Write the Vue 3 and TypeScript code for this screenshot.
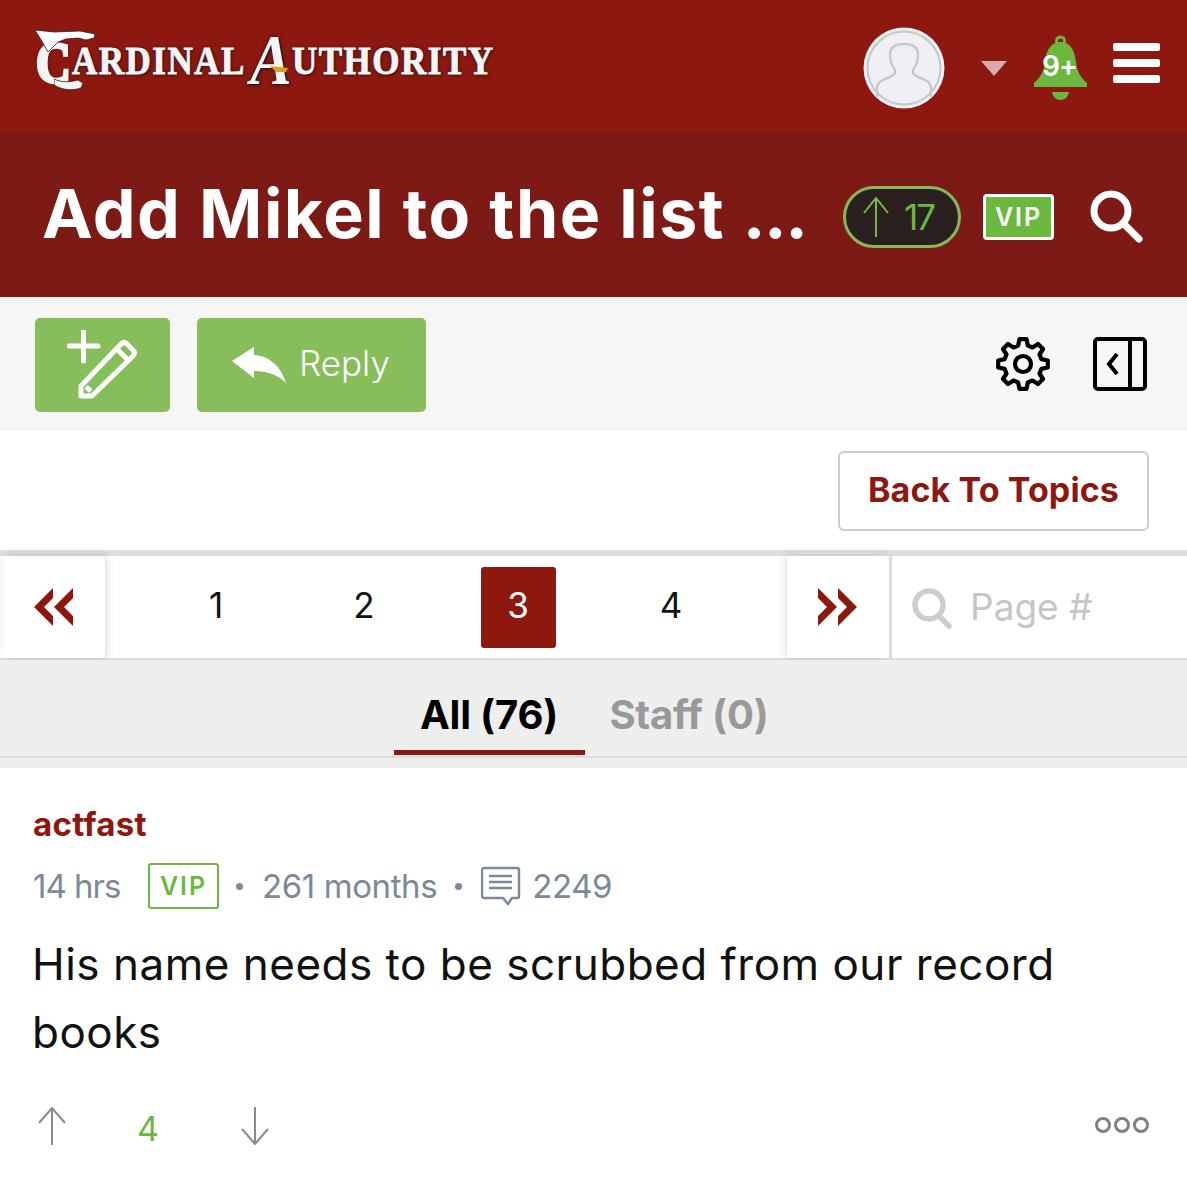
<script setup lang="ts">
const pages = [
  { n: 1, active: false },
  { n: 2, active: false },
  { n: 3, active: true },
  { n: 4, active: false },
]

function gearPath(cx: number, cy: number, outer: number, inner: number, teeth: number): string {
  const step = 360 / teeth
  const pts: string[] = []
  const at = (deg: number, r: number) => {
    const a = (deg * Math.PI) / 180
    return `${(cx + r * Math.cos(a)).toFixed(1)} ${(cy + r * Math.sin(a)).toFixed(1)}`
  }
  for (let i = 0; i < teeth; i++) {
    const c = i * step - 90
    pts.push(at(c - 15, inner), at(c - 8, outer), at(c + 8, outer), at(c + 15, inner))
  }
  return `M${pts.join(' L')} Z`
}
const gear = gearPath(27, 28, 25, 19, 8)
</script>

<template>
  <div class="page">
    <header class="top">
      <div class="logo">
        <span class="big-c">
          <span class="c-letter">C</span>
          <svg class="wing" viewBox="0 0 62 24" width="62" height="24" aria-hidden="true">
            <path d="M1 1 L20 3 L46 2 L61 5 L60 9 L52 11 L44 9 L32 10 L24 13 L20 17 L14 23 L9 14 Z" fill="#fff" stroke="#2a2222" stroke-width=".8" />
          </svg>
          <svg class="tail" viewBox="0 0 30 14" width="30" height="14" aria-hidden="true">
            <path d="M0 2 C8 6 16 5 24 3 L29 6 L27 11 C18 14 8 13 0 8 Z" fill="#f4f4f4" stroke="#2a2222" stroke-width=".8" />
          </svg>
        </span>
        <span class="word first">ARDINAL</span>
        <span class="big-a">
          <span class="a-letter">A</span>
          <svg class="beak" viewBox="0 0 18 8" width="18" height="8" aria-hidden="true"><path d="M0 1 L18 3 L16 7 L6 7 Z" fill="#d9a21f" /></svg>
        </span>
        <span class="word">UTHORITY</span>
      </div>
      <div class="top-right">
        <div class="avatar">
          <svg viewBox="0 0 82 82" width="82" height="82" aria-hidden="true">
            <circle cx="41" cy="41" r="40.5" fill="#eef0f4" />
            <circle cx="41" cy="41" r="36.5" fill="none" stroke="#c4c8cc" stroke-width="2" />
            <path d="M14 70 V61 C14 54 22 52 29 49 C33 47 33 44 31 41 C28 37 27 33 27 28 C27 20 33 17 41 17 C49 17 55 20 55 28 C55 33 54 37 51 41 C49 44 49 47 53 49 C60 52 68 54 68 61 V70" fill="none" stroke="#c4c8cc" stroke-width="2.4" />
          </svg>
        </div>
        <span class="caret"></span>
        <div class="bell">
          <svg viewBox="0 0 55 66" width="55" height="66" aria-hidden="true">
            <circle cx="27.5" cy="6" r="4" fill="none" stroke="#6cb83f" stroke-width="3" />
            <path d="M27.5 7 C17 7 13 17 12 27 C11 36 8 42 1 48 V52 H54 V48 C47 42 44 36 43 27 C42 17 38 7 27.5 7 Z" fill="#6cb83f" />
            <path d="M19 57 H36 C35 62 32 65 27.5 65 C23 65 20 62 19 57 Z" fill="#6cb83f" />
          </svg>
          <span class="bell-count">9+</span>
        </div>
        <div class="burger"><i></i><i></i><i></i></div>
      </div>
    </header>

    <section class="band">
      <h1 class="title">Add Mikel to the list <span class="dots">...</span></h1>
      <div class="pill">
        <svg viewBox="0 0 28 42" width="28" height="42" aria-hidden="true">
          <path d="M14 41 V2 M2 17 L14 2 L26 17" fill="none" stroke="#76b84c" stroke-width="2" />
        </svg>
        <span>17</span>
      </div>
      <span class="vip-solid">VIP</span>
      <svg class="band-search" viewBox="0 0 54 54" width="54" height="54" aria-hidden="true">
        <circle cx="21" cy="21" r="17" fill="none" stroke="#fff" stroke-width="7" />
        <path d="M34 34 L49 49" stroke="#fff" stroke-width="7" stroke-linecap="round" />
      </svg>
    </section>

    <section class="toolbar">
      <button class="green new">
        <svg viewBox="0 0 72 70" width="72" height="70" aria-hidden="true">
          <path d="M2 16 H31 M16.5 1 V31" stroke="#fff" stroke-width="5" stroke-linecap="round" fill="none" />
          <path d="M14 66 V56 L54 14 C56 12 58 12 60 14 L66 20 C68 22 68 24 66 26 L25 66 Z M19 57 L24 61 M51 20 L60 29" stroke="#fff" stroke-width="5" stroke-linejoin="round" fill="none" />
        </svg>
      </button>
      <button class="green reply">
        <svg viewBox="0 0 54 36" width="54" height="36" aria-hidden="true">
          <path d="M0 14 L22 0 V8 C38 9 49 20 54 36 C46 28 36 24 22 24 V31 Z" fill="#fff" />
        </svg>
        <span class="reply-label">Reply</span>
      </button>
      <div class="spacer"></div>
      <svg class="gear" viewBox="0 0 54 56" width="54" height="56" aria-hidden="true">
        <path :d="gear" fill="none" stroke="#000" stroke-width="4.2" stroke-linejoin="round" />
        <circle cx="27" cy="28" r="8" fill="none" stroke="#000" stroke-width="4.2" />
      </svg>
      <svg class="panel" viewBox="0 0 54 54" width="54" height="54" aria-hidden="true">
        <rect x="2" y="2" width="50" height="50" rx="3" fill="none" stroke="#000" stroke-width="4" />
        <path d="M37 2 V52" stroke="#000" stroke-width="4" />
        <path d="M24 17 L16 27 L24 37" fill="none" stroke="#000" stroke-width="4" />
      </svg>
    </section>

    <section class="back-row">
      <button class="back">Back To Topics</button>
    </section>

    <nav class="pager">
      <div class="arrow prev">
        <svg viewBox="0 0 40 38" width="40" height="38" aria-hidden="true">
          <path d="M19 0 L0 19 L19 38 V28 L10 19 L19 10 Z M39 0 L20 19 L39 38 V28 L30 19 L39 10 Z" fill="#8c1810" />
        </svg>
      </div>
      <div class="nums">
        <span v-for="p in pages" :key="p.n" class="num" :class="{ on: p.active }"><b>{{ p.n }}</b></span>
      </div>
      <div class="arrow next">
        <svg viewBox="0 0 40 38" width="40" height="38" aria-hidden="true">
          <path d="M0 0 L19 19 L0 38 V28 L9 19 L0 10 Z M20 0 L39 19 L20 38 V28 L29 19 L20 10 Z" fill="#8c1810" />
        </svg>
      </div>
      <div class="page-find">
        <svg viewBox="0 0 40 42" width="40" height="42" aria-hidden="true">
          <circle cx="17" cy="17" r="14" fill="none" stroke="#cdcdcd" stroke-width="5.5" />
          <path d="M27 28 L37 38" stroke="#cdcdcd" stroke-width="5.5" stroke-linecap="round" />
        </svg>
        <span class="find-label">Page #</span>
      </div>
    </nav>

    <div class="tabs">
      <div class="tab current">All (76)</div>
      <div class="tab">Staff (0)</div>
    </div>

    <article class="post">
      <div class="author">actfast</div>
      <div class="meta">
        <span class="age">14 hrs</span>
        <span class="vip-line">VIP</span>
        <i class="dot"></i>
        <span>261 months</span>
        <i class="dot"></i>
        <svg viewBox="0 0 40 40" width="40" height="40" aria-hidden="true">
          <path d="M3 2 H36 C37 2 38 3 38 4 V30 C38 31 37 32 36 32 H31 L27 38 L22 32 H3 C2 32 1 31 1 30 V4 C1 3 2 2 3 2 Z" fill="none" stroke="#7b8a99" stroke-width="2.4" stroke-linejoin="round" />
          <path d="M8 10 H31 M8 16 H31 M8 22 H31" stroke="#7b8a99" stroke-width="2.4" />
        </svg>
        <span>2249</span>
      </div>
      <p class="body">His name needs to be scrubbed from our record books</p>
      <div class="votes">
        <svg viewBox="0 0 28 38" width="28" height="38" aria-hidden="true">
          <path d="M14 38 V1 M1 16 L14 1 L27 16" fill="none" stroke="#8a8a8a" stroke-width="2" />
        </svg>
        <span class="score">4</span>
        <svg class="down" viewBox="0 0 28 38" width="28" height="38" aria-hidden="true">
          <path d="M14 0 V37 M1 22 L14 37 L27 22" fill="none" stroke="#8a8a8a" stroke-width="2" />
        </svg>
        <div class="spacer"></div>
        <div class="more"><i></i><i></i><i></i></div>
      </div>
    </article>
  </div>
</template>

<style>
html, body { margin: 0; background: #fff; }
</style>

<style scoped>
.page {
  width: 1187px;
  height: 1200px;
  overflow: hidden;
  font-family: Inter, Lato, sans-serif;
  color: #111;
  background: #fff;
}
.spacer { flex: 1; }
button { font-family: inherit; cursor: pointer; }

.top {
  height: 133px;
  box-sizing: border-box;
  background: #8c1810;
  display: flex;
  align-items: flex-start;
  justify-content: space-between;
  padding: 27px 27px 0 34px;
}
.logo {
  display: flex;
  align-items: center;
  height: 66px;
  font-family: "Liberation Serif", serif;
  font-weight: 700;
  color: #f4f4f4;
  text-shadow: 0 0 3px #1a1a1a, 1px 1px 2px #1a1a1a;
}
.word {
  font-size: 35px;
  letter-spacing: 1.5px;
  line-height: 1;
  transform: scaleY(1.14);
  -webkit-text-stroke: .8px #f4f4f4;
  white-space: nowrap;
}
.word.first { width: 178px; flex: none; }
.big-c {
  position: relative;
  width: 38px;
  height: 66px;
  flex: none;
  font-size: 48px;
  line-height: 50px;
  -webkit-text-stroke: 3px #f4f4f4;
}
.c-letter { position: absolute; left: 2px; top: 11px; transform: scaleY(1.2); }
.wing { position: absolute; left: 0; top: 2px; }
.tail { position: absolute; left: 20px; top: 50px; }
.big-a {
  position: relative;
  width: 42px;
  flex: none;
  font-size: 62px;
  line-height: 1;
  font-style: italic;
  text-align: center;
}
.a-letter { display: inline-block; transform: scaleY(1.15); }
.beak { position: absolute; left: 20px; top: 36px; }
.top-right { display: flex; align-items: flex-start; }
.avatar { width: 82px; height: 82px; margin-left: -1px; }
.caret {
  width: 0;
  height: 0;
  border-left: 13px solid transparent;
  border-right: 13px solid transparent;
  border-top: 15px solid #d9a9ab;
  margin: 34px 26px 0 36px;
}
.bell { position: relative; width: 55px; height: 66px; margin-top: 8px; }
.bell svg { display: block; }
.bell-count {
  position: absolute;
  left: 9px;
  top: 13px;
  color: #fff;
  font-size: 28px;
  font-weight: 600;
  line-height: 36px;
  letter-spacing: -1px;
}
.burger { display: flex; flex-direction: column; gap: 8px; margin: 16px 0 0 25px; }
.burger i { display: block; width: 47px; height: 8px; border-radius: 2px; background: #fff; }

.band {
  height: 164px;
  box-sizing: border-box;
  background: #7e1a15;
  display: flex;
  align-items: center;
  padding: 0 44px 0 42px;
}
.title {
  margin: -4px 0 0;
  width: 801px;
  flex: none;
  color: #fff;
  font-size: 68px;
  font-weight: 700;
  line-height: 1;
  white-space: nowrap;
  letter-spacing: 1.5px;
}
.dots { letter-spacing: -1.5px; }
.pill {
  flex: none;
  width: 118px;
  height: 62px;
  box-sizing: border-box;
  border: 3px solid #84b858;
  border-radius: 31px;
  background: #2a2020;
  display: flex;
  align-items: center;
  color: #6cb83f;
  font-size: 35px;
  letter-spacing: -2px;
  gap: 14px;
  padding-left: 16px;
  margin-top: 4px;
}
.vip-solid {
  flex: none;
  width: 71px;
  height: 46px;
  box-sizing: border-box;
  margin: 4px 0 0 22px;
  border: 3px solid #fff;
  border-radius: 4px;
  background: #6cb83f;
  color: #fff;
  font-size: 25px;
  font-weight: 600;
  letter-spacing: 2px;
  line-height: 40px;
  text-align: center;
}
.band-search { flex: none; margin: 4px 0 0 36px; }

.toolbar {
  height: 134px;
  box-sizing: border-box;
  background: #f6f6f6;
  display: flex;
  align-items: center;
  padding: 0 40px 0 35px;
}
.green {
  height: 94px;
  border: 0;
  border-radius: 5px;
  background: #87be5b;
  color: #fff;
  display: flex;
  align-items: center;
  padding: 0;
  margin-top: 1px;
}
.new { width: 135px; justify-content: center; }
.reply { width: 229px; margin-left: 27px; padding-left: 35px; gap: 13px; font-size: 35px; font-weight: 300; }
.reply-label { padding-bottom: 4px; }
.gear { margin-right: 43px; }

.back-row {
  height: 119px;
  box-sizing: border-box;
  display: flex;
  justify-content: flex-end;
  padding: 20px 38px 0 0;
}
.back {
  width: 311px;
  height: 80px;
  box-sizing: border-box;
  background: #fff;
  border: 2px solid #ccc;
  border-radius: 6px;
  color: #8c1810;
  font-size: 34px;
  font-weight: 700;
  letter-spacing: .1px;
  padding: 0 0 3px;
}

.pager {
  height: 110px;
  box-sizing: border-box;
  border-top: 6px solid #ddd;
  border-bottom: 2px solid #ddd;
  display: flex;
  background: #fff;
}
.arrow {
  width: 102px;
  flex: none;
  display: flex;
  align-items: center;
  justify-content: center;
  background: #fff;
  border-radius: 3px;
  box-shadow: 2px 0 8px rgba(0, 0, 0, .14);
}
.prev { margin-left: 3px; box-sizing: border-box; }
.next { box-shadow: -2px 0 8px rgba(0, 0, 0, .12); }
.nums {
  width: 682px;
  flex: none;
  box-sizing: border-box;
  padding-left: 37px;
  display: grid;
  grid-template-columns: 148px 148px 160px 146px;
  align-items: center;
  justify-items: center;
  font-size: 35px;
}
.num b {
  font-weight: 400;
  display: flex;
  align-items: center;
  justify-content: center;
  width: 75px;
  height: 81px;
  box-sizing: border-box;
  border-radius: 3px;
  margin-top: 1px;
  padding-bottom: 6px;
}
.num.on b { background: #8c1810; color: #fff; }
.page-find {
  flex: 1;
  margin-right: 2px;
  border-left: 3px solid #ddd;
  display: flex;
  align-items: center;
  gap: 18px;
  padding-left: 20px;
  color: #c6c6c6;
  font-size: 37px;
}
.page-find svg { margin-top: 4px; }
.find-label { padding-bottom: 2px; }

.tabs {
  height: 108px;
  box-sizing: border-box;
  background: #eee;
  display: flex;
  justify-content: center;
  position: relative;
}
.tabs::after {
  content: "";
  position: absolute;
  left: 0;
  right: 0;
  top: 96px;
  height: 2px;
  background: #ddd;
}
.tab {
  width: 191px;
  height: 95px;
  box-sizing: border-box;
  padding-top: 29px;
  text-align: center;
  font-size: 40px;
  line-height: 52px;
  font-weight: 700;
  letter-spacing: -.2px;
  color: #999;
}
.tab + .tab { width: 209px; }
.current { color: #000; border-bottom: 5px solid #8c1810; position: relative; z-index: 1; }

.post { padding: 36px 33px 0; }
.author { color: #8c1810; font-size: 33px; font-weight: 700; line-height: 40px; letter-spacing: .3px; }
.meta {
  display: flex;
  align-items: center;
  color: #7b8a99;
  font-size: 33px;
  letter-spacing: -.4px;
  height: 46px;
  margin-top: 19px;
}
.age { width: 115px; flex: none; letter-spacing: -1px; }
.vip-line {
  width: 71px;
  height: 46px;
  box-sizing: border-box;
  border: 2px solid #6cb83f;
  border-radius: 3px;
  color: #6cb83f;
  font-size: 25px;
  font-weight: 600;
  letter-spacing: 2px;
  line-height: 42px;
  text-align: center;
  margin-right: 17px;
}
.dot { width: 7px; height: 7px; border-radius: 50%; background: #7b8a99; margin-right: 19px; flex: none; }
.meta span + .dot { margin-left: 18px; }
.meta .vip-line + .dot { margin-left: 0; }
.meta svg { margin-right: 11px; flex: none; }
.body {
  margin: 21px 0 0 -1px;
  max-width: 1060px;
  font-size: 44px;
  line-height: 68px;
  font-weight: 400;
  letter-spacing: .5px;
  color: #111;
}
.votes { display: flex; align-items: center; margin-top: 40px; padding: 0 0 0 5px; height: 40px; }
.score { color: #6cb83f; font-size: 34px; width: 164px; text-align: center; margin-top: 4px; }
.down { margin-left: 11px; }
.more { display: flex; gap: 3px; margin-right: 5px; margin-top: -3px; }
.more i { box-sizing: border-box; width: 16px; height: 16px; border: 3px solid #808080; border-radius: 50%; }
</style>
